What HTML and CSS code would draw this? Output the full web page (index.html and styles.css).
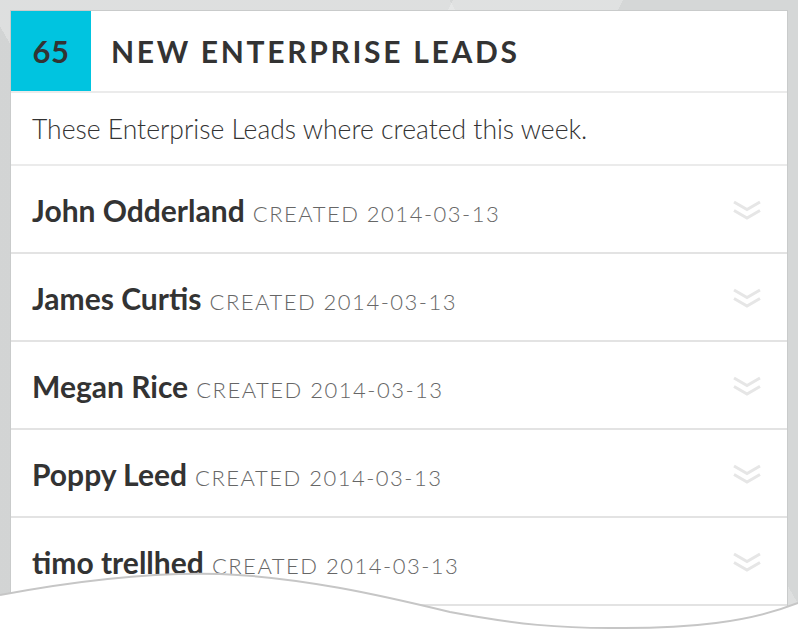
FILE: index.html
```html
<!DOCTYPE html>
<html lang="en">
<head>
<meta charset="utf-8">
<title>New Enterprise Leads</title>
<link rel="stylesheet" href="styles.css">
</head>
<body>
<div class="page">
  <section class="card">
    <header class="card-head">
      <div class="count">65</div>
      <h1 class="title">NEW ENTERPRISE LEADS</h1>
    </header>
    <p class="desc">These Enterprise Leads where created this week.</p>
    <ul class="leads">
      <li class="lead"><span class="lead-text"><span class="name">John Odderland</span> <span class="meta">CREATED 2014-03-13</span></span>
        <svg class="chev" viewBox="0 0 30 22" width="30" height="22"><path d="M2 3 L15 10.5 L28 3 M2 11.5 L15 19 L28 11.5"/></svg></li>
      <li class="lead"><span class="lead-text"><span class="name">James Curtis</span> <span class="meta">CREATED 2014-03-13</span></span>
        <svg class="chev" viewBox="0 0 30 22" width="30" height="22"><path d="M2 3 L15 10.5 L28 3 M2 11.5 L15 19 L28 11.5"/></svg></li>
      <li class="lead"><span class="lead-text"><span class="name">Megan Rice</span> <span class="meta">CREATED 2014-03-13</span></span>
        <svg class="chev" viewBox="0 0 30 22" width="30" height="22"><path d="M2 3 L15 10.5 L28 3 M2 11.5 L15 19 L28 11.5"/></svg></li>
      <li class="lead"><span class="lead-text"><span class="name">Poppy Leed</span> <span class="meta">CREATED 2014-03-13</span></span>
        <svg class="chev" viewBox="0 0 30 22" width="30" height="22"><path d="M2 3 L15 10.5 L28 3 M2 11.5 L15 19 L28 11.5"/></svg></li>
      <li class="lead"><span class="lead-text"><span class="name">timo trellhed</span> <span class="meta">CREATED 2014-03-13</span></span>
        <svg class="chev" viewBox="0 0 30 22" width="30" height="22"><path d="M2 3 L15 10.5 L28 3 M2 11.5 L15 19 L28 11.5"/></svg></li>
    </ul>
  </section>
  <svg class="tear" viewBox="0 570 798 60" width="798" height="60" preserveAspectRatio="none">
    <path class="tear-fill" d="M0,595 C80,580 150,572 220,574 C300,577 380,595 450,612 C520,625 560,628 610,628 C690,629 750,622 798,603 L798,630 L0,630 Z"/>
    <path class="tear-line" d="M0,595 C80,580 150,572 220,574 C300,577 380,595 450,612 C520,625 560,628 610,628 C690,629 750,622 798,603"/>
  </svg>
</div>
</body>
</html>
```

FILE: styles.css
```css
* { box-sizing: border-box; }
html, body {
  margin: 0;
  padding: 0;
  width: 798px;
  height: 630px;
  overflow: hidden;
}
body {
  font-family: "Lato", "Open Sans", sans-serif;
  background-color: #d9dbdb;
  background-image:
    linear-gradient(118deg, rgba(255,255,255,0) 0 40%, rgba(255,255,255,0.25) 40% 55%, rgba(255,255,255,0) 55%),
    linear-gradient(60deg, rgba(0,0,0,0.03) 0 30%, rgba(255,255,255,0.12) 30% 70%, rgba(0,0,0,0.02) 70%);
}
.page {
  position: relative;
  width: 798px;
  height: 630px;
  padding: 10px 10px 0 10px;
}
.card {
  background: #fff;
  border: 1px solid #c9cbcb;
  border-bottom: none;
  height: 640px;
  overflow: hidden;
}
.card-head {
  display: flex;
  align-items: center;
  height: 82px;
  border-bottom: 2px solid #ebebeb;
}
.count {
  width: 80px;
  height: 80px;
  align-self: flex-start;
  background: #00c4e0;
  color: #333;
  font-weight: 700;
  font-size: 31px;
  display: flex;
  align-items: center;
  justify-content: center;
  letter-spacing: 0.5px;
}
.title {
  margin: 0 0 0 20px;
  font-size: 30px;
  font-weight: 700;
  letter-spacing: 2.7px;
  color: #333;
}
.desc {
  margin: 0;
  height: 73px;
  display: flex;
  align-items: center;
  padding: 0 0 0 21px;
  font-size: 26.5px;
  font-weight: 300;
  color: #333;
  border-bottom: 2px solid #ebebeb;
}
.leads {
  list-style: none;
  margin: 0;
  padding: 0;
}
.lead {
  display: flex;
  align-items: center;
  height: 88px;
  padding: 2px 25px 0 21px;
  border-bottom: 2px solid #e3e3e3;
}
.lead-text {
  white-space: nowrap;
}
.name {
  font-size: 30px;
  font-weight: 700;
  color: #333;
}
.meta {
  margin-left: 4px;
  font-size: 22px;
  font-weight: 300;
  color: #666;
  letter-spacing: 1.5px;
}
.chev {
  margin-left: auto;
  fill: none;
  stroke: #e6e6e6;
  stroke-width: 3;
}
.tear {
  position: absolute;
  left: 0;
  bottom: 0;
  display: block;
}
.tear-fill { fill: #fff; }
.tear-line { fill: none; stroke: #c6c6c6; stroke-width: 2; }
```
